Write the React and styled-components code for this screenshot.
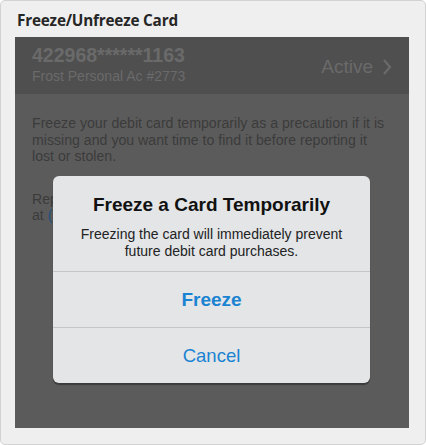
import React from "react";
import styled, { createGlobalStyle } from "styled-components";

const GlobalStyle = createGlobalStyle`
	html, body {
		margin: 0;
		padding: 0;
		background: #ffffff;
	}
	body {
		font-family: "Liberation Sans", Arial, sans-serif;
	}
`;

const Frame = styled.div`
	width: 426px;
	height: 445px;
	box-sizing: border-box;
	background-color: #efefef;
	border: 1px solid #d2d2d2;
	border-radius: 5px;
	padding: 0 16px 0 14px;
	display: flex;
	flex-direction: column;
`;

const Heading = styled.div`
	font-family: "Open Sans", sans-serif;
	font-weight: 700;
	font-size: 15.3px;
	color: #262626;
	height: 36px;
	line-height: 38px;
	padding-left: 2px;
	letter-spacing: -0.2px;
`;

const Screen = styled.div`
	position: relative;
	width: 394px;
	height: 391px;
	background-color: #5b5b5b;
	display: flex;
	flex-direction: column;
`;

const CardBar = styled.div`
	height: 57px;
	background-color: #4f4f4f;
	display: flex;
	align-items: center;
	justify-content: space-between;
	padding: 0 17px 0 17px;
	color: #6a6a6a;
`;

const CardInfo = styled.div`
	display: flex;
	flex-direction: column;
	gap: 1px;
	margin-top: -4px;
`;

const CardNumber = styled.div`
	font-size: 19.5px;
	font-weight: 700;
`;

const CardAccount = styled.div`
	font-size: 14px;
`;

const Status = styled.div`
	display: flex;
	align-items: center;
	gap: 9px;
	font-size: 19px;
	margin-top: 3px;
`;

const Body = styled.div`
	padding: 21px 8px 0 17px;
	color: #3b3b3b;
	font-size: 14.15px;
	line-height: 16.5px;
	display: flex;
	flex-direction: column;
	gap: 26px;
`;

const Link = styled.span`
	color: #1f4f7a;
`;

const Dialog = styled.div`
	position: absolute;
	left: 38px;
	top: 139px;
	width: 317px;
	height: 207px;
	background-color: #e3e5e7;
	border-radius: 6px;
	box-shadow: 0 2px 1px rgba(0, 0, 0, 0.35);
	display: flex;
	flex-direction: column;
	overflow: hidden;
`;

const DialogHead = styled.div`
	height: 96px;
	box-sizing: border-box;
	padding-top: 18px;
	text-align: center;
	border-bottom: 1px solid #c3c5c7;
`;

const DialogTitle = styled.div`
	font-size: 19px;
	font-weight: 700;
	color: #111111;
	margin-bottom: 10px;
`;

const DialogText = styled.div`
	font-size: 14px;
	line-height: 17px;
	color: #222222;
`;

const DialogButton = styled.div`
	flex: 1;
	display: flex;
	align-items: center;
	justify-content: center;
	font-size: ${(p) => (p.$bold ? "19px" : "18.5px")};
	font-weight: ${(p) => (p.$bold ? 700 : 400)};
	color: #1a83d2;
	border-top: ${(p) => (p.$divider ? "1px solid #c3c5c7" : "none")};
`;

function Chevron() {
	return (
		<svg width="10" height="18" viewBox="0 0 10 18">
			<path d="M2 2 L8 9 L2 16" fill="none" stroke="#6a6a6a" strokeWidth="2.2" />
		</svg>
	);
}

function App() {
	return (
		<>
			<GlobalStyle />
			<Frame>
				<Heading>Freeze/Unfreeze Card</Heading>
				<Screen>
					<CardBar>
						<CardInfo>
							<CardNumber>422968******1163</CardNumber>
							<CardAccount>Frost Personal Ac #2773</CardAccount>
						</CardInfo>
						<Status>
							Active
							<Chevron />
						</Status>
					</CardBar>
					<Body>
						<div>
							Freeze your debit card temporarily as a precaution if it is
							<br />
							missing and you want time to find it before reporting it
							<br />
							lost or stolen.
						</div>
						<div>
							Report a lost or stolen card immediately by calling us
							<br />
							at <Link>(800) 562-6732</Link>.
						</div>
					</Body>
					<Dialog>
						<DialogHead>
							<DialogTitle>Freeze a Card Temporarily</DialogTitle>
							<DialogText>
								Freezing the card will immediately prevent
								<br />
								future debit card purchases.
							</DialogText>
						</DialogHead>
						<DialogButton $bold>Freeze</DialogButton>
						<DialogButton $divider>Cancel</DialogButton>
					</Dialog>
				</Screen>
			</Frame>
		</>
	);
}

export default App;
